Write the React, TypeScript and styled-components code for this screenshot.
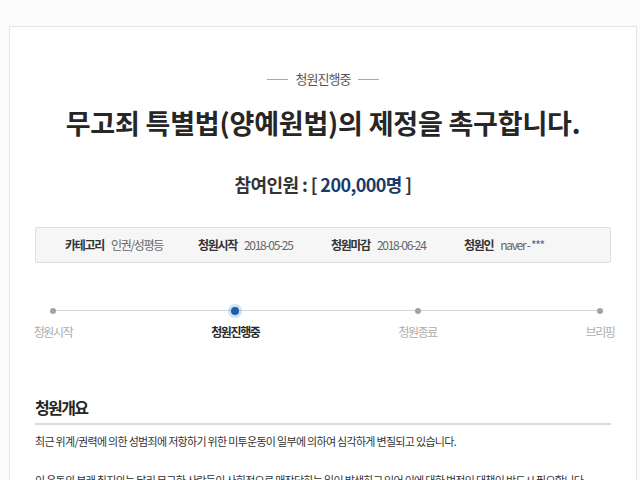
import React, { FC } from 'react'
import styled, { createGlobalStyle } from 'styled-components'

const GlobalStyle = createGlobalStyle`
    html, body {
        margin: 0;
        padding: 0;
        background: #fbfbfb;
        font-family: 'Noto Sans CJK KR', 'Noto Sans', sans-serif;
        overflow: hidden;
    }
`

export const Page = styled.div`
    width: 640px;
    height: 480px;
    padding: 26px 0 0 9px;
    box-sizing: border-box;
    overflow: hidden;
`

export const Card = styled.div`
    width: 628px;
    box-sizing: border-box;
    padding: 43px 25px 0 25px;
    background: #fff;
    border: 1px solid #e6e6e6;
    border-bottom: none;
    display: flex;
    flex-direction: column;
`

export const Status = styled.div`
    display: flex;
    justify-content: center;
    align-items: center;
    gap: 8px;
    font-size: 13px;
    line-height: 18px;
    letter-spacing: -1px;
    color: #555;

    &::before,
    &::after {
        content: '';
        width: 21px;
        height: 1px;
        background: #a8a8a8;
    }
`

export const Title = styled.h1`
    margin: 18px 0 0 0;
    font-size: 27px;
    line-height: 34px;
    font-weight: 700;
    letter-spacing: -0.2px;
    text-align: center;
    color: #262626;
`

export const Count = styled.div`
    margin: 31px 0 0 0;
    font-size: 18px;
    line-height: 26px;
    font-weight: 700;
    letter-spacing: -0.6px;
    text-align: center;
    color: #333;
`

export const CountNum = styled.span`
    color: #1c3a6a;
`

export const InfoBox = styled.div`
    margin: 30px 0 0 0;
    height: 36px;
    box-sizing: border-box;
    padding: 0 0 0 29px;
    display: grid;
    grid-template-columns: repeat(4, 133px);
    align-items: center;
    background: #f6f6f6;
    border: 1px solid #dedede;
    border-radius: 2px;
`

export const InfoItem = styled.div`
    display: flex;
    align-items: center;
    gap: 7px;
    font-size: 12px;
    line-height: 16px;
    letter-spacing: -1.3px;
    white-space: nowrap;
`

export const InfoLabel = styled.span`
    font-weight: 700;
    color: #333;
`

export const InfoValue = styled.span`
    color: #666;
`

export const Timeline = styled.div`
    margin: 43px -14px 0 -7px;
    display: flex;
    justify-content: space-between;
    background: linear-gradient(#d6d6d6, #d6d6d6) no-repeat 25px 4px / calc(100% - 50px) 1px;
`

export const Step = styled.div`
    width: 50px;
    display: flex;
    flex-direction: column;
    align-items: center;
    gap: 8px;
`

export const DotHolder = styled.div`
    height: 10px;
    display: flex;
    align-items: center;
    justify-content: center;
`

export const Dot = styled.div<{ $active?: boolean }>`
    width: ${(p) => (p.$active ? '8px' : '6px')};
    height: ${(p) => (p.$active ? '8px' : '6px')};
    margin-top: -1px;
    border-radius: 50%;
    background: ${(p) => (p.$active ? '#1f5ea6' : '#a3a3a3')};
    box-shadow: ${(p) => (p.$active ? '0 0 0 3px rgba(70, 150, 225, 0.28)' : 'none')};
`

export const StepLabel = styled.div<{ $active?: boolean }>`
    font-size: 12px;
    line-height: 16px;
    letter-spacing: -1.4px;
    white-space: nowrap;
    font-weight: ${(p) => (p.$active ? 700 : 400)};
    color: ${(p) => (p.$active ? '#2a2a2a' : '#adadad')};
`

export const SectionTitle = styled.h2`
    margin: 56px 0 0 0;
    padding: 0 0 5px 0;
    font-size: 16px;
    line-height: 22px;
    font-weight: 700;
    letter-spacing: -1.6px;
    color: #262626;
    border-bottom: 2px solid #dcdcdc;
`

export const Paragraph = styled.p<{ $gap?: number }>`
    margin: ${(p) => p.$gap ?? 8}px 0 0 0;
    font-size: 11px;
    line-height: 16px;
    letter-spacing: -0.7px;
    color: #333;
    white-space: nowrap;
`

const steps = [
    { label: '청원시작' },
    { label: '청원진행중', active: true },
    { label: '청원종료' },
    { label: '브리핑' },
]

const App: FC = () => {
    return (
        <Page>
            <GlobalStyle />
            <Card>
                <Status>청원진행중</Status>
                <Title>무고죄 특별법(양예원법)의 제정을 촉구합니다.</Title>
                <Count>
                    참여인원 : [ <CountNum>200,000명</CountNum> ]
                </Count>
                <InfoBox>
                    <InfoItem>
                        <InfoLabel>카테고리</InfoLabel>
                        <InfoValue>인권/성평등</InfoValue>
                    </InfoItem>
                    <InfoItem>
                        <InfoLabel>청원시작</InfoLabel>
                        <InfoValue>2018-05-25</InfoValue>
                    </InfoItem>
                    <InfoItem>
                        <InfoLabel>청원마감</InfoLabel>
                        <InfoValue>2018-06-24</InfoValue>
                    </InfoItem>
                    <InfoItem>
                        <InfoLabel>청원인</InfoLabel>
                        <InfoValue>naver - ***</InfoValue>
                    </InfoItem>
                </InfoBox>
                <Timeline>
                    {steps.map((s) => (
                        <Step key={s.label}>
                            <DotHolder>
                                <Dot $active={s.active} />
                            </DotHolder>
                            <StepLabel $active={s.active}>{s.label}</StepLabel>
                        </Step>
                    ))}
                </Timeline>
                <SectionTitle>청원개요</SectionTitle>
                <Paragraph>
                    최근 위계/권력에 의한 성범죄에 저항하기 위한 미투운동이 일부에 의하여 심각하게 변질되고 있습니다.
                </Paragraph>
                <Paragraph $gap={23}>
                    이 운동의 본래 취지와는 달리 무고한 사람들이 사회적으로 매장당하는 일이 발생하고 있어 이에 대한 법적인 대책이 반드시 필요합니다.
                </Paragraph>
            </Card>
        </Page>
    )
}

export default App
